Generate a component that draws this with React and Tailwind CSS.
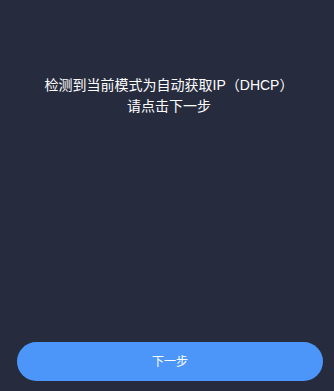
import React from "react";

export default function App() {
    return (
        <div
            className="w-[334px] h-[391px] bg-[#262b3e] flex flex-col text-white"
            style={{ fontFamily: '"Liberation Sans", "Noto Sans CJK SC", sans-serif' }}
        >
            <div className="flex-1 pt-[75px] text-center text-[14px] leading-[21px] pl-[4px]">
                <p>检测到当前模式为自动获取IP（DHCP）</p>
                <p>请点击下一步</p>
            </div>
            <div className="pl-[17px] pr-[11px] pb-[10px]">
                <button className="w-full h-[39px] rounded-full bg-[#4c96fa] text-[12px] text-white">
                    下一步
                </button>
            </div>
        </div>
    );
}
